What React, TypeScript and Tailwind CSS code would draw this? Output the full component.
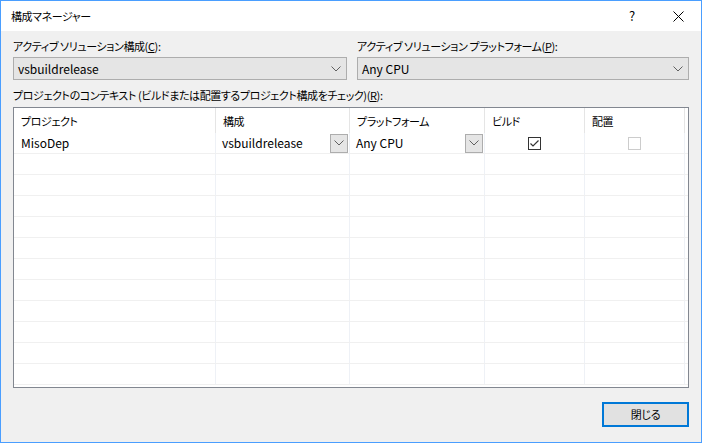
import React from "react";

// Japanese text is set a little tighter to match the narrow UI face
const jp = "text-[11px] tracking-[-0.4px]";

function Chevron() {
  return (
    <svg width="10" height="6" viewBox="0 0 10 6" className="block">
      <polyline points="0.5,0.5 5,5 9.5,0.5" fill="none" stroke="#606060" strokeWidth="1" />
    </svg>
  );
}

function Combo({ value }: { value: string }) {
  return (
    <div className="flex h-[23px] items-center justify-between border border-[#adadad] bg-[#e5e5e5] pl-[4px] pr-[5px] text-[12px] text-black">
      <span>{value}</span>
      <Chevron />
    </div>
  );
}

function CellDrop({ value }: { value: string }) {
  return (
    <div className="flex h-full items-center justify-between pl-[6px] pr-[1px]">
      <span>{value}</span>
      <div className="flex h-[19px] w-[18px] items-center justify-center border border-[#adadad] bg-[#e5e5e5]">
        <Chevron />
      </div>
    </div>
  );
}

function Check({ checked }: { checked: boolean }) {
  return (
    <div
      className={
        checked
          ? "flex h-[13px] w-[13px] items-center justify-center border border-[#333333] bg-white"
          : "h-[13px] w-[13px] border border-[#cccccc] bg-white"
      }
    >
      {checked && (
        <svg width="11" height="11" viewBox="0 0 11 11">
          <polyline points="1.5,5.5 4,8 9.5,2.5" fill="none" stroke="#333333" strokeWidth="1.2" />
        </svg>
      )}
    </div>
  );
}

const cols = [
  { w: "w-[202px]", title: "プロジェクト" },
  { w: "w-[134px]", title: "構成" },
  { w: "w-[135px]", title: "プラットフォーム" },
  { w: "w-[100px]", title: "ビルド" },
  { w: "w-[100px]", title: "配置" },
];

export default function App() {
  const empty = Array.from({ length: 11 });

  return (
    <div className="flex h-[443px] w-[702px] flex-col border border-[#4a9eff] bg-[#f0f0f0] font-['Noto_Sans_CJK_JP','Noto_Sans',sans-serif] text-[12px] text-black [font-feature-settings:'palt']">
      {/* title bar */}
      <div className="flex h-[30px] items-center bg-white pl-[10px]">
        <span className={`flex-1 ${jp}`}>構成マネージャー</span>
        <span className="w-[46px] text-center text-[13px]">?</span>
        <div className="flex w-[46px] items-center justify-center">
          <svg width="11" height="11" viewBox="0 0 11 11">
            <path d="M0.5 0.5 L10.5 10.5 M10.5 0.5 L0.5 10.5" stroke="#000" strokeWidth="1" />
          </svg>
        </div>
      </div>

      <div className="flex flex-1 flex-col px-3 pt-[7px]">
        <div className="flex gap-[10px]">
          <div className="flex w-[334px] flex-col gap-[3px]">
            <span className={`leading-[16px] ${jp}`}>
              アクティブ ソリューション構成(<span className="underline">C</span>):
            </span>
            <Combo value="vsbuildrelease" />
          </div>
          <div className="flex flex-1 flex-col gap-[3px]">
            <span className={`leading-[16px] ${jp}`}>
              アクティブ ソリューション プラットフォーム(<span className="underline">P</span>):
            </span>
            <Combo value="Any CPU" />
          </div>
        </div>

        <span className={`mt-[7px] leading-[16px] ${jp}`}>
          プロジェクトのコンテキスト (ビルドまたは配置するプロジェクト構成をチェック)(<span className="underline">R</span>):
        </span>

        <div className="mt-[4px] h-[281px] border border-[#828790] bg-white">
          {/* header */}
          <div className="flex h-[25px]">
            {cols.map((c) => (
              <div key={c.title} className={`${c.w} ${jp} flex items-center border-r border-[#e5e5e5] pl-[7px] pt-[1px]`}>
                {c.title}
              </div>
            ))}
          </div>

          {/* data row */}
          <div className="flex h-[21px] border-b border-[#f0f0f0]">
            <div className="flex w-[202px] items-center border-r border-[#eef1f6] pl-[7px]">MisoDep</div>
            <div className="w-[134px] border-r border-[#eef1f6]">
              <CellDrop value="vsbuildrelease" />
            </div>
            <div className="w-[135px] border-r border-[#eef1f6]">
              <CellDrop value="Any CPU" />
            </div>
            <div className="flex w-[100px] items-center justify-center border-r border-[#eef1f6]">
              <Check checked />
            </div>
            <div className="flex w-[100px] items-center justify-center border-r border-[#eef1f6]">
              <Check checked={false} />
            </div>
          </div>

          {empty.map((_, i) => (
            <div key={i} className="flex h-[21px] border-b border-[#f0f0f0]">
              {cols.map((c) => (
                <div key={c.title} className={`${c.w} border-r border-[#eef1f6]`} />
              ))}
            </div>
          ))}
        </div>

        <div className="flex justify-end pt-[14px]">
          <button className={`h-[25px] w-[87px] border-2 border-[#0078d7] bg-[#e1e1e1] text-black ${jp}`}>
            閉じる
          </button>
        </div>
      </div>
    </div>
  );
}
